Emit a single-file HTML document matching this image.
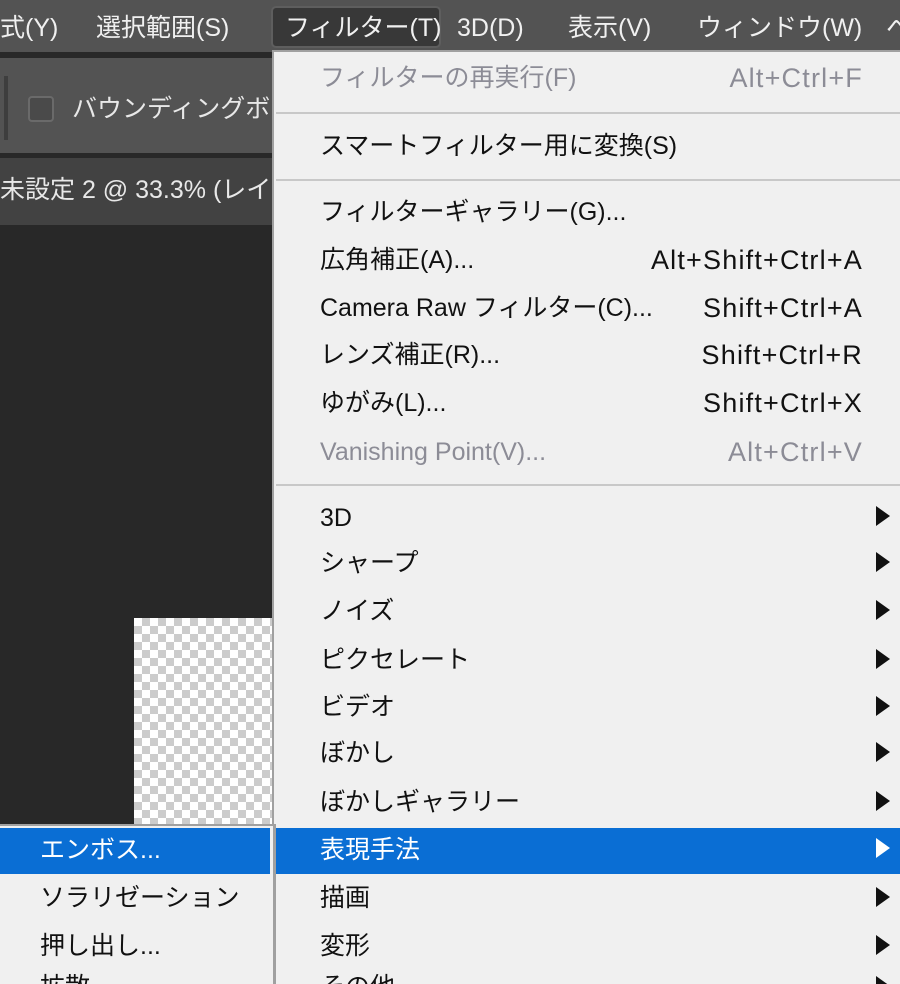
<!DOCTYPE html>
<html style="overflow:hidden;height:984px"><head><meta charset="utf-8"><style>
body{margin:0;width:900px;height:984px;overflow:hidden;position:relative;background:#282828;font-family:"Liberation Sans","Noto Sans CJK JP",sans-serif}
div{position:absolute;box-sizing:border-box}
.t{white-space:nowrap;font-size:25px;line-height:30px}
.mb{color:#f0f0f0}
.mi{left:320px;color:#111}
.sc{right:37px;color:#111;text-align:right;letter-spacing:1.2px;font-size:27px}
.dis{color:#8c8c96}
.ar{left:876px;width:0;height:0;border-top:10px solid transparent;border-bottom:10px solid transparent;border-left:14px solid #111}
.sep{left:276px;width:624px;height:2px;background:#c8c8c8}
</style></head><body>
<div style="left:0;top:0;width:900px;height:52px;background:#535353"></div>
<div class="t mb" style="left:0;top:13px">式(Y)</div>
<div class="t mb" style="left:96px;top:13px">選択範囲(S)</div>
<div style="left:271px;top:6px;width:170px;height:42px;background:#383838;border:2px solid #5e5e5e;border-radius:5px"></div>
<div class="t mb" style="left:285px;top:13px">フィルター(T)</div>
<div class="t mb" style="left:457px;top:13px">3D(D)</div>
<div class="t mb" style="left:568px;top:13px">表示(V)</div>
<div class="t mb" style="left:697px;top:13px">ウィンドウ(W)</div>
<div class="t mb" style="left:886px;top:13px">へ</div>
<div style="left:0;top:58px;width:900px;height:95px;background:#535353"></div>
<div style="left:4px;top:76px;width:4px;height:64px;background:#3e3e3e"></div>
<div style="left:28px;top:96px;width:26px;height:26px;background:#4a4a4a;border:2px solid #6a6a6a;border-radius:4px"></div>
<div class="t" style="left:72px;top:94px;color:#e8e8e8">バウンディングボックス</div>
<div style="left:0;top:158px;width:900px;height:67px;background:#424242"></div>
<div class="t" style="left:0;top:175px;color:#e8e8e8">未設定 2 @ 33.3% (レイヤー</div>
<div style="left:134px;top:618px;width:140px;height:210px;background-color:#fff;background-image:linear-gradient(45deg,#ccc 25%,transparent 25%,transparent 75%,#ccc 75%),linear-gradient(45deg,#ccc 25%,transparent 25%,transparent 75%,#ccc 75%);background-size:16px 16px;background-position:0 0,8px 8px"></div>
<div style="left:272px;top:50px;width:628px;height:934px;background:#f0f0f0;border-left:2px solid #a0a0a0;border-top:2px solid #a0a0a0"></div>
<div class="t mi dis" style="top:63px">フィルターの再実行(F)</div><div class="t sc dis" style="top:63px">Alt+Ctrl+F</div>
<div class="sep" style="top:112px"></div>
<div class="t mi" style="top:131px">スマートフィルター用に変換(S)</div>
<div class="sep" style="top:179px"></div>
<div class="t mi" style="top:197px">フィルターギャラリー(G)...</div>
<div class="t mi" style="top:245px">広角補正(A)...</div><div class="t sc" style="top:245px">Alt+Shift+Ctrl+A</div>
<div class="t mi" style="top:293px">Camera Raw フィルター(C)...</div><div class="t sc" style="top:293px">Shift+Ctrl+A</div>
<div class="t mi" style="top:340px">レンズ補正(R)...</div><div class="t sc" style="top:340px">Shift+Ctrl+R</div>
<div class="t mi" style="top:388px">ゆがみ(L)...</div><div class="t sc" style="top:388px">Shift+Ctrl+X</div>
<div class="t mi dis" style="top:437px">Vanishing Point(V)...</div><div class="t sc dis" style="top:437px">Alt+Ctrl+V</div>
<div class="sep" style="top:484px"></div>
<div class="t mi" style="top:503px">3D</div><div class="ar" style="top:506px"></div>
<div class="t mi" style="top:548px">シャープ</div><div class="ar" style="top:552px"></div>
<div class="t mi" style="top:596px">ノイズ</div><div class="ar" style="top:600px"></div>
<div class="t mi" style="top:645px">ピクセレート</div><div class="ar" style="top:649px"></div>
<div class="t mi" style="top:692px">ビデオ</div><div class="ar" style="top:696px"></div>
<div class="t mi" style="top:738px">ぼかし</div><div class="ar" style="top:742px"></div>
<div class="t mi" style="top:787px">ぼかしギャラリー</div><div class="ar" style="top:791px"></div>
<div style="left:276px;top:828px;width:624px;height:46px;background:#0a6ed4"></div>
<div class="t mi" style="top:835px;color:#fff">表現手法</div><div class="ar" style="top:838px;border-left-color:#fff"></div>
<div class="t mi" style="top:883px">描画</div><div class="ar" style="top:887px"></div>
<div class="t mi" style="top:931px">変形</div><div class="ar" style="top:935px"></div>
<div class="t mi" style="top:972px">その他</div><div class="ar" style="top:976px"></div>
<div style="left:0;top:824px;width:276px;height:160px;background:#f0f0f0;border-top:2px solid #a0a0a0;border-right:3px solid #a0a0a0"></div>
<div style="left:0;top:828px;width:270px;height:46px;background:#0a6ed4"></div>
<div class="t" style="left:40px;top:835px;color:#fff">エンボス...</div>
<div class="t" style="left:40px;top:883px;color:#111">ソラリゼーション</div>
<div class="t" style="left:40px;top:931px;color:#111">押し出し...</div>
<div class="t" style="left:40px;top:972px;color:#111">拡散...</div>
</body></html>
